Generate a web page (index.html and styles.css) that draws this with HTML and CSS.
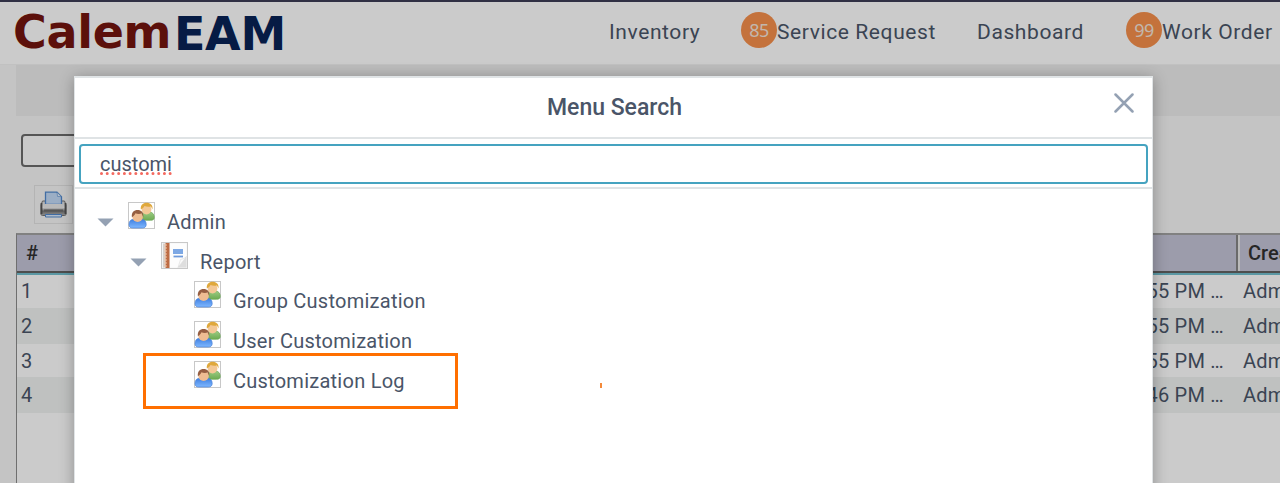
FILE: index.html
```html
<!DOCTYPE html>
<html lang="en">
<head>
    <meta charset="UTF-8">
    <meta name="viewport" content="width=device-width, initial-scale=1.0">
    <title>CalemEAM - Menu Search</title>
    <link rel="stylesheet" href="styles.css">
</head>
<body>
    <!-- Shared icons -->
    <svg class="icon-defs" width="0" height="0">
        <defs>
            <linearGradient id="blueShirt" x1="0" y1="0" x2="0" y2="1">
                <stop offset="0" stop-color="#3f7fe0"/>
                <stop offset="1" stop-color="#7fb8ff"/>
            </linearGradient>
            <linearGradient id="greenShirt" x1="0" y1="0" x2="0" y2="1">
                <stop offset="0" stop-color="#9ccb83"/>
                <stop offset="1" stop-color="#6dab52"/>
            </linearGradient>
            <linearGradient id="printerBody" x1="0" y1="0" x2="0" y2="1">
                <stop offset="0" stop-color="#d8d8d8"/>
                <stop offset=".45" stop-color="#f2f2f2"/>
                <stop offset=".7" stop-color="#777"/>
                <stop offset="1" stop-color="#b5b5b5"/>
            </linearGradient>
            <symbol id="users" viewBox="0 0 27 27">
                <rect x=".5" y=".5" width="26" height="26" fill="#fff" stroke="#c8c8c8"/>
                <path d="M12.5 15.500c0-3 2-5.500 5-5.500h4c2.600 0 4.800 2 4.800 5.500 0 2-1.500 2.800-3.800 2.800h-7c-2 0-3-.5-3-2.800z" fill="url(#greenShirt)" stroke="#6fa95a" stroke-width=".7"/>
                <ellipse cx="18.500" cy="7.500" rx="4.900" ry="5" fill="#f3c896"/>
                <path d="M12.800 7.200C12.400 3 15 .8 18.600.8s6.500 2.200 5.900 6.600l-1.500-3c-2.500.5-5 .2-6.500-.5-.7 1.300-2 2.700-3.700 3.300z" fill="#dfa83c"/>
                <path d="M1 22.500c0-3.500 2-5.300 5-5.300h7c3 0 5.200 1.800 5.200 5.300 0 2.300-1.500 3.500-3.700 3.500H4.500C2.300 26 1 24.800 1 22.500z" fill="url(#blueShirt)" stroke="#4a82d8" stroke-width=".7"/>
                <ellipse cx="9.600" cy="15" rx="5.200" ry="5" fill="#eebc92"/>
                <path d="M3.900 15.200C3.300 10.500 6 8.100 9.600 8.100s6.300 2.500 5.700 7.100l-1.600-3.600c-2.500.5-5 .3-6.200-.3-.8 1.500-2 3.200-3.600 3.900z" fill="#955e42"/>
            </symbol>
            <symbol id="report" viewBox="0 0 27 27">
                <rect x=".5" y=".5" width="26" height="26" fill="#f4f4f4" stroke="#c8c8c8"/>
                <rect x="2" y="1.500" width="2" height="24" fill="#d5d0cc"/>
                <rect x="4.500" y="1" width="4" height="25" fill="#bd6b43"/>
                <path d="M3 3h3M3 6h3M3 9h3M3 12h3M3 15h3M3 18h3M3 21h3M3 24h3" stroke="#f0c7a8" stroke-width="1"/>
                <path d="M9 1.500h16.500V16L17 25.500H9z" fill="#fdfdfd"/>
                <path d="M25.500 14.500L17 25.500h8.500z" fill="#dedede"/>
                <path d="M25.500 14.500c-2 2-4.500 2.500-6 3L17 25.500z" fill="#fafafa" stroke="#d5d5d5" stroke-width=".5"/>
                <rect x="12" y="7" width="10" height="5" fill="#7da8e4"/>
                <path d="M12.500 14.500h9.500" stroke="#6f9ada" stroke-width="1.800"/>
            </symbol>
        </defs>
    </svg>

    <div class="page">
        <header class="header">
            <div class="logo"><span class="logo-calem">Calem</span><span class="logo-eam">EAM</span></div>
            <nav class="nav">
                <span class="nav-item inventory">Inventory</span>
                <span class="nav-item service"><span class="count">85</span><span>Service Request</span></span>
                <span class="nav-item dashboard">Dashboard</span>
                <span class="nav-item work"><span class="count">99</span><span>Work Order</span></span>
            </nav>
        </header>

        <main class="content">
            <div class="band"></div>
            <div class="filter"></div>
            <div class="print-button">
                <svg width="27" height="27" viewBox="0 0 27 27">
                    <path d="M2.500 10h22L26 14v9c0 1-.6 1.500-1.500 1.500h-22C1.600 24.500 1 24 1 23v-9z" fill="url(#printerBody)" stroke="#757575"/>
                    <path d="M5.500 13.500V1.200h11.500l4.500 4.500v7.800z" fill="#c2daf7" stroke="#5289cd" stroke-width="1.300"/>
                    <path d="M17 1.200l.5 4.200 4 .3z" fill="#e9f2fd" stroke="#5289cd" stroke-width=".6"/>
                    <rect x="3.500" y="13" width="20" height="4" rx="1.500" fill="#e8e8e8"/>
                    <path d="M1.500 12v11M25.500 12v11" stroke="#555" stroke-width="1.800"/>
                    <path d="M4 19.500h19" stroke="#6d6d6d" stroke-width="2"/>
                    <path d="M5.500 23.500h16v2.500h-16z" fill="#dbe9fa" stroke="#5289cd"/>
                </svg>
            </div>
            <div class="grid">
                <div class="grid-head">
                    <span class="col-num">#</span>
                    <span class="col-time"></span>
                    <span class="col-user">Created By</span>
                </div>
                <div class="grid-row"><span class="col-num">1</span><span class="col-time">55 PM …</span><span class="col-user">Admin</span></div>
                <div class="grid-row alt"><span class="col-num">2</span><span class="col-time">55 PM …</span><span class="col-user">Admin</span></div>
                <div class="grid-row"><span class="col-num">3</span><span class="col-time">55 PM …</span><span class="col-user">Admin</span></div>
                <div class="grid-row alt"><span class="col-num">4</span><span class="col-time">46 PM …</span><span class="col-user">Admin</span></div>
            </div>
        </main>
    </div>

    <div class="overlay"></div>

    <div class="modal">
        <div class="modal-header">
            <h2 class="modal-title">Menu Search</h2>
            <svg class="close" width="20" height="20" viewBox="0 0 20 20">
                <path d="M1.500 1.500l17 17M18.500 1.500l-17 17" stroke="#94a1b3" stroke-width="2.500" stroke-linecap="round"/>
            </svg>
        </div>
        <div class="search">
            <div class="search-box"><span class="search-text">customi<svg class="spelling" width="72" height="3" viewBox="0 0 72 3"><path d="M1.500 1.500h70" stroke="#f4695f" stroke-width="3" stroke-linecap="round" stroke-dasharray="0 5.720"/></svg></span></div>
        </div>
        <div class="tree">
            <div class="node">
                <svg class="arrow" width="17" height="9" viewBox="0 0 17 9"><path d="M.5.500h16l-8 8z" fill="#94a1b3"/></svg>
                <svg class="icon" width="27" height="27"><use href="#users"/></svg>
                <span class="label">Admin</span>
            </div>
            <div class="node level-1">
                <svg class="arrow" width="17" height="9" viewBox="0 0 17 9"><path d="M.5.500h16l-8 8z" fill="#94a1b3"/></svg>
                <svg class="icon" width="27" height="27"><use href="#report"/></svg>
                <span class="label">Report</span>
            </div>
            <div class="node level-2">
                <svg class="icon" width="27" height="27"><use href="#users"/></svg>
                <span class="label">Group Customization</span>
            </div>
            <div class="node level-2">
                <svg class="icon" width="27" height="27"><use href="#users"/></svg>
                <span class="label">User Customization</span>
            </div>
            <div class="node level-2">
                <svg class="icon" width="27" height="27"><use href="#users"/></svg>
                <span class="label">Customization Log</span>
            </div>
        </div>
    </div>

    <!-- Callout drawn over the menu -->
    <div class="callout"></div>
    <div class="callout-tick"></div>
</body>
</html>
```

FILE: styles.css
```css
* {
    box-sizing: border-box;
}

body {
    margin: 0;
    height: 483px;
    overflow: hidden;
    background: #f6f6f6;
    font-family: Roboto, "Liberation Sans", sans-serif;
    font-size: 20px;
    letter-spacing: 0.25px;
    color: #4a5568;
}

.icon-defs {
    position: absolute;
}

.page {
    height: 483px;
    display: flex;
    flex-direction: column;
}

.header {
    flex: none;
    height: 65px;
    display: flex;
    background: #fefefe;
    border-top: 2px solid #3c3c56;
    border-bottom: 1px solid #f2f2f2;
}

.logo {
    width: 609px;
    padding: 2px 0 0 13px;
    display: flex;
    font: bold 46px/56px "DejaVu Sans", sans-serif;
    letter-spacing: -0.3px;
}

.logo-calem {
    width: 161px;
    color: #73150e;
}

.logo-eam {
    padding-top: 2px;
    color: #082256;
}

.nav {
    display: flex;
    font-size: 21px;
    letter-spacing: 0.6px;
    white-space: nowrap;
}

.nav-item {
    display: flex;
    line-height: 60px;
}

.inventory {
    width: 132px;
}

.service {
    width: 236px;
}

.dashboard {
    width: 149px;
}

.count {
    width: 36px;
    height: 36px;
    margin-top: 10px;
    border-radius: 50%;
    background: #f58f4b;
    color: #f3e4d9;
    font: 18px/36px "Noto Sans", sans-serif;
    letter-spacing: -0.5px;
    text-align: center;
}

.content {
    flex: 1;
    padding-left: 16px;
    display: flex;
    flex-direction: column;
    align-items: flex-start;
}

.band {
    width: 100%;
    height: 51px;
    background: #ebebeb;
}

.filter {
    width: 300px;
    height: 33px;
    margin: 18px 0 0 5px;
    border: 2px solid #6b6b6b;
    border-radius: 4px;
    background: #fcfcfc;
}

.print-button {
    width: 39px;
    height: 39px;
    margin: 18px 0 0 18px;
    border: 1px solid #e2e2e2;
    padding: 5px;
}

.print-button svg {
    display: block;
}

.grid {
    width: 1264px;
    flex: 1;
    margin-top: 9px;
    border-left: 1px solid #8b8b8b;
    border-top: 2px solid #a2a2a2;
    background: #fefefe;
    overflow: hidden;
}

.grid-head,
.grid-row {
    width: 1400px;
    display: flex;
}

.grid-head {
    height: 38px;
    border-bottom: 2px solid #626262;
    background: #c3c3d6;
    color: #303030;
    font-weight: 500;
    line-height: 37px;
    letter-spacing: 0;
}

.grid-row {
    height: 33px;
    line-height: 34px;
}

.grid-row:nth-child(2) {
    height: 35px;
    border-top: 2px solid #72bfce;
    line-height: 33px;
}

.grid-row.alt {
    height: 36px;
    background: #eff2f1;
    line-height: 36px;
}

.col-num {
    width: 1100px;
    padding-left: 4px;
}

.grid-head .col-num {
    padding-left: 9px;
}

.col-time {
    width: 120px;
    padding-right: 13px;
    text-align: right;
}

.grid-head .col-time {
    width: 121px;
    border-right: 2px solid #858585;
}

.col-user {
    padding-left: 6px;
}

.grid-head .col-user {
    padding-left: 8px;
    border-left: 2px solid #e9e9e9;
}

.overlay {
    position: absolute;
    inset: 0;
    background: rgba(0, 0, 0, 0.2);
}

.modal {
    position: absolute;
    top: 76px;
    left: 74px;
    width: 1079px;
    height: 420px;
    border: 2px solid #e0e4e6;
    border-right-width: 1px;
    border-left-width: 1px;
    background: #fff;
    box-shadow: 0 2px 14px rgba(0, 0, 0, 0.3);
}

.modal-header {
    height: 61px;
    display: flex;
    justify-content: space-between;
    border-bottom: 2px solid #dfe3e5;
}

.modal-title {
    flex: 1;
    margin: 0;
    padding-left: 40px;
    font-size: 23px;
    font-weight: 500;
    line-height: 59px;
    letter-spacing: 0;
    text-align: center;
}

.close {
    margin: 15px 18px 0 0;
}

.search {
    height: 50px;
    padding: 5px 4px 0;
    border-bottom: 2px solid #dfe3e5;
}

.search-box {
    height: 40px;
    padding-left: 19px;
    border: 2px solid #45a3c0;
    border-radius: 4px;
    line-height: 36px;
}

.search-text {
    position: relative;
    display: inline-block;
    letter-spacing: 0;
}

.spelling {
    position: absolute;
    left: 0;
    bottom: 7px;
}

.tree {
    padding: 13px 0 0 22px;
}

.node {
    height: 39.700px;
    display: flex;
}

.level-1 {
    padding-left: 33px;
}

.level-2 {
    padding-left: 97px;
}

.arrow {
    margin: 16px 14px 0 0;
}

.icon {
    margin-right: 12px;
}

.label {
    line-height: 40px;
    white-space: nowrap;
}

.callout {
    position: absolute;
    left: 143px;
    top: 353px;
    width: 315px;
    height: 56px;
    border: 3px solid #ff6f00;
}

.callout-tick {
    position: absolute;
    left: 600px;
    top: 383px;
    width: 2px;
    height: 5px;
    background: #f48a3a;
}
```
